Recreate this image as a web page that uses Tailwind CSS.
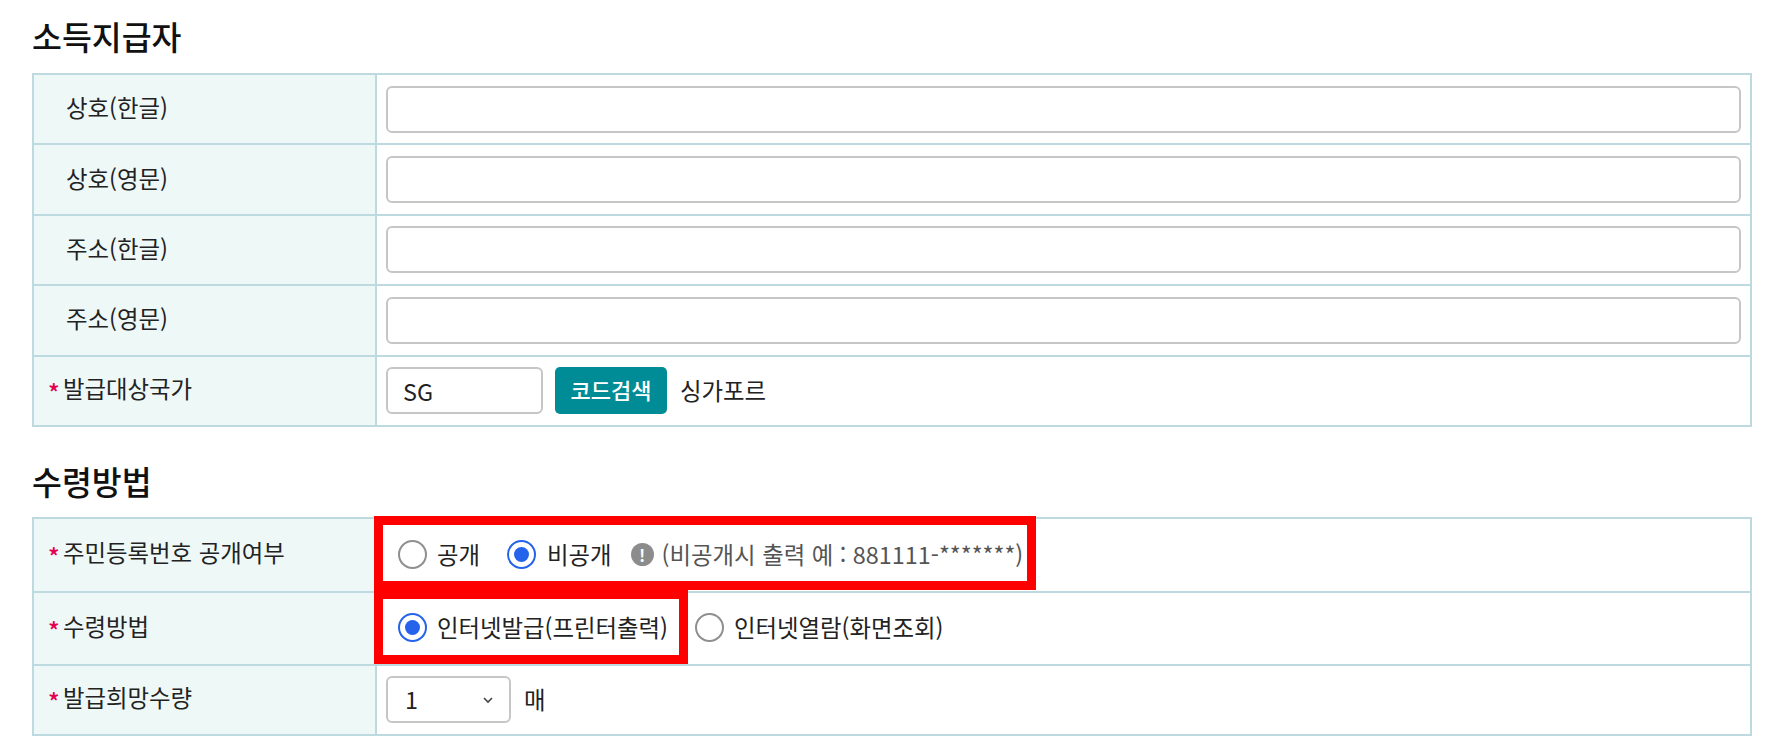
<!DOCTYPE html>
<html lang="ko">
  <head>
    <meta charset="UTF-8" />
    <title>소득지급자</title>
    <script src="https://cdn.jsdelivr.net/npm/@tailwindcss/browser@4"></script>
  </head>
  <body class="bg-white text-[#222] font-['Noto_Sans_CJK_KR','Noto_Sans',sans-serif] text-[23.4px] overflow-hidden">
    <div class="relative w-[1788px] h-[750px] pl-[32px] pr-[36px] pt-[14px]">
      <h2 class="text-[32.5px] font-medium leading-[44px] mb-[15px] text-[#111]">소득지급자</h2>
      <table class="w-full border-collapse table-fixed border-2 border-[#bcdadf]">
        <colgroup><col class="w-[343px]" /><col /></colgroup>
        <tbody>
          <tr class="h-[70.4px] border-b-2 border-[#bcdadf]">
            <th class="bg-[#eef8f7] border-r-2 border-[#bcdadf] pl-[32px] pb-[3px] text-left font-normal">상호(한글)</th>
            <td class="px-[9px]"><input type="text" class="w-full h-[47px] block bg-white border-2 border-[#c6c6c6] rounded-[6px]" /></td>
          </tr>
          <tr class="h-[70.4px] border-b-2 border-[#bcdadf]">
            <th class="bg-[#eef8f7] border-r-2 border-[#bcdadf] pl-[32px] pb-[3px] text-left font-normal">상호(영문)</th>
            <td class="px-[9px]"><input type="text" class="w-full h-[47px] block bg-white border-2 border-[#c6c6c6] rounded-[6px]" /></td>
          </tr>
          <tr class="h-[70.4px] border-b-2 border-[#bcdadf]">
            <th class="bg-[#eef8f7] border-r-2 border-[#bcdadf] pl-[32px] pb-[3px] text-left font-normal">주소(한글)</th>
            <td class="px-[9px]"><input type="text" class="w-full h-[47px] block bg-white border-2 border-[#c6c6c6] rounded-[6px]" /></td>
          </tr>
          <tr class="h-[70.4px] border-b-2 border-[#bcdadf]">
            <th class="bg-[#eef8f7] border-r-2 border-[#bcdadf] pl-[32px] pb-[3px] text-left font-normal">주소(영문)</th>
            <td class="px-[9px]"><input type="text" class="w-full h-[47px] block bg-white border-2 border-[#c6c6c6] rounded-[6px]" /></td>
          </tr>
          <tr class="h-[70.4px]">
            <th class="bg-[#eef8f7] border-r-2 border-[#bcdadf] pl-[14px] pb-[4px] text-left font-normal"><span class="inline-block w-[15px] text-[#e5004f] text-[24px] font-medium leading-none align-[-4px]">*</span>발급대상국가</th>
            <td class="px-[9px]">
              <div class="flex items-center">
                <input type="text" value="SG" class="w-[157px] h-[47px] bg-white border-2 border-[#c6c6c6] rounded-[6px] px-[15px]" />
                <button class="ml-[12px] h-[47px] w-[112px] bg-[#008c97] text-white rounded-[5px] font-medium text-[22px] pb-[2px]">코드검색</button>
                <span class="ml-[13px]">싱가포르</span>
              </div>
            </td>
          </tr>
        </tbody>
      </table>

      <h2 class="text-[32.5px] font-medium leading-[44px] mt-[32px] mb-[14px] text-[#111]">수령방법</h2>
      <table class="w-full border-collapse table-fixed border-2 border-[#bcdadf]">
        <colgroup><col class="w-[343px]" /><col /></colgroup>
        <tbody>
          <tr class="h-[74px] border-b-2 border-[#bcdadf]">
            <th class="bg-[#eef8f7] border-r-2 border-[#bcdadf] pl-[14px] pb-[4px] text-left font-normal"><span class="inline-block w-[15px] text-[#e5004f] text-[24px] font-medium leading-none align-[-4px]">*</span>주민등록번호 공개여부</th>
            <td class="pl-[21px] pb-[1px]">
              <div class="flex items-center">
                <span class="w-[29px] h-[29px] rounded-full border-2 border-[#8f8f8f] bg-white"></span>
                <span class="ml-[10px]">공개</span>
                <span class="ml-[27px] w-[29px] h-[29px] rounded-full border-2 border-[#2563eb] bg-white flex items-center justify-center"><span class="w-[15px] h-[15px] rounded-full bg-[#2563eb]"></span></span>
                <span class="ml-[11px]">비공개</span>
                <span class="ml-[19px] w-[23px] h-[23px] rounded-full bg-[#8c8c8c] text-white text-[17px] font-bold flex items-center justify-center">!</span>
                <span class="ml-[8px] text-[#555] text-[23.4px]">(비공개시 출력 예 : 881111-*******)</span>
              </div>
            </td>
          </tr>
          <tr class="h-[73px] border-b-2 border-[#bcdadf]">
            <th class="bg-[#eef8f7] border-r-2 border-[#bcdadf] pl-[14px] pb-[4px] text-left font-normal"><span class="inline-block w-[15px] text-[#e5004f] text-[24px] font-medium leading-none align-[-4px]">*</span>수령방법</th>
            <td class="pl-[21px] pb-[1px]">
              <div class="flex items-center">
                <span class="w-[29px] h-[29px] rounded-full border-2 border-[#2563eb] bg-white flex items-center justify-center"><span class="w-[15px] h-[15px] rounded-full bg-[#2563eb]"></span></span>
                <span class="ml-[10px]">인터넷발급(프린터출력)</span>
                <span class="ml-[27px] w-[29px] h-[29px] rounded-full border-2 border-[#8f8f8f] bg-white"></span>
                <span class="ml-[10px]">인터넷열람(화면조회)</span>
              </div>
            </td>
          </tr>
          <tr class="h-[70px]">
            <th class="bg-[#eef8f7] border-r-2 border-[#bcdadf] pl-[14px] pb-[4px] text-left font-normal"><span class="inline-block w-[15px] text-[#e5004f] text-[24px] font-medium leading-none align-[-4px]">*</span>발급희망수량</th>
            <td class="px-[9px]">
              <div class="flex items-center">
                <div class="relative w-[125px] h-[47px] border-2 border-[#c6c6c6] rounded-[6px] flex items-center pl-[17px]">
                  1
                  <svg class="absolute right-[15px] top-[16px]" width="12" height="12" viewBox="0 0 12 12" fill="none" stroke="#444" stroke-width="1.6"><path d="M2 4l4 4 4-4" /></svg>
                </div>
                <span class="ml-[13px]">매</span>
              </div>
            </td>
          </tr>
        </tbody>
      </table>

      <div class="absolute left-[374px] top-[516px] w-[662px] h-[74px] border-[9px] border-[#ff0000] pointer-events-none"></div>
      <div class="absolute left-[374px] top-[590px] w-[314px] h-[74px] border-[9px] border-[#ff0000] pointer-events-none"></div>
    </div>
  </body>
</html>
